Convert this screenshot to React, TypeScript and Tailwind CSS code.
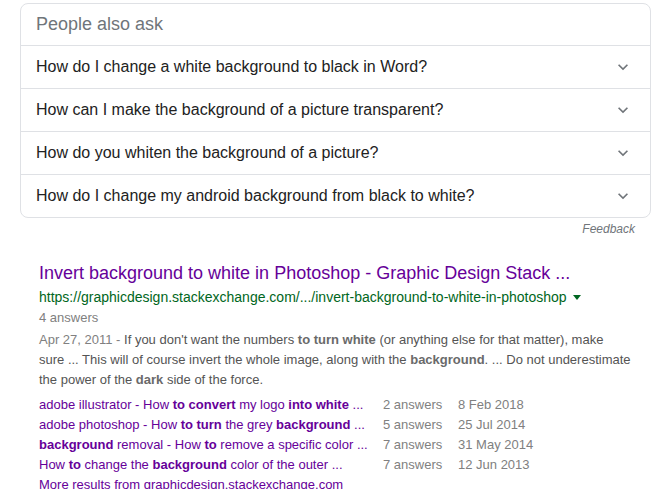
import React from "react";

const questions = [
  "How do I change a white background to black in Word?",
  "How can I make the background of a picture transparent?",
  "How do you whiten the background of a picture?",
  "How do I change my android background from black to white?",
];

type Part = { t: string; b?: boolean };

const sublinks: { parts: Part[]; answers: string; date: string }[] = [
  {
    parts: [
      { t: "adobe illustrator - How " },
      { t: "to convert", b: true },
      { t: " my logo " },
      { t: "into white", b: true },
      { t: " ..." },
    ],
    answers: "2 answers",
    date: "8 Feb 2018",
  },
  {
    parts: [
      { t: "adobe photoshop - How " },
      { t: "to turn", b: true },
      { t: " the grey " },
      { t: "background", b: true },
      { t: " ..." },
    ],
    answers: "5 answers",
    date: "25 Jul 2014",
  },
  {
    parts: [
      { t: "background", b: true },
      { t: " removal - How " },
      { t: "to", b: true },
      { t: " remove a specific color ..." },
    ],
    answers: "7 answers",
    date: "31 May 2014",
  },
  {
    parts: [
      { t: "How " },
      { t: "to", b: true },
      { t: " change the " },
      { t: "background", b: true },
      { t: " color of the outer ..." },
    ],
    answers: "7 answers",
    date: "12 Jun 2013",
  },
];

const Chevron = () => (
  <svg width="20" height="20" viewBox="0 0 24 24" fill="#70757a">
    <path d="M16.59 8.59L12 13.17 7.41 8.59 6 10l6 6 6-6z" />
  </svg>
);

export default function App() {
  return (
    <div className="w-[660px] h-[489px] overflow-hidden bg-white font-['Liberation_Sans',Arial,sans-serif]">
      {/* People also ask */}
      <div className="ml-[20px] mt-[3px] w-[631px] border border-[#dfe1e5] rounded-lg">
        <div className="h-[41px] flex items-center pl-[15px] text-[18px] text-[#70757a]">
          People also ask
        </div>
        {questions.map((q) => (
          <div
            key={q}
            className="h-[43px] border-t border-[#dfe1e5] flex items-center justify-between pl-[15px] pr-[17px] text-[16px] text-[#222]"
          >
            <span>{q}</span>
            <Chevron />
          </div>
        ))}
      </div>

      <div className="w-[650px] text-right pr-[15px] mt-[3px] h-[16px] leading-[16px] text-[12px] italic text-[#70757a]">
        Feedback
      </div>

      {/* Result */}
      <div className="pl-[39px] mt-[25px]">
        <div className="text-[18px] leading-[22px] text-[#660099]">
          Invert background to white in Photoshop - Graphic Design Stack ...
        </div>
        <div className="flex items-center text-[14px] leading-[20px] text-[#006621] mt-[3px]">
          https://graphicdesign.stackexchange.com/.../invert-background-to-white-in-photoshop
          <span className="ml-[6px] inline-block w-0 h-0 border-l-[4px] border-r-[4px] border-t-[5px] border-l-transparent border-r-transparent border-t-[#006621]" />
        </div>
        <div className="text-[13px] leading-[20px] text-[#808080] mt-[1px]">4 answers</div>
        <div className="whitespace-nowrap text-[13px] leading-[20px] text-[#545454] mt-[2px]">
          <span className="text-[#808080]">Apr 27, 2011 - </span>
          If you don't want the numbers <b className="text-[#6a6a6a]">to turn white</b> (or anything else for that
          matter), make
          <br />
          sure ... This will of course invert the whole image, along with the{" "}
          <b className="text-[#6a6a6a]">background</b>. ... Do not underestimate
          <br />
          the power of the <b className="text-[#6a6a6a]">dark</b> side of the force.
        </div>
        <div className="mt-[5px] text-[13px] leading-[20px]">
          {sublinks.map((s) => (
            <div key={s.date} className="flex">
              <div className="w-[344px] text-[#660099] whitespace-nowrap">
                {s.parts.map((p, i) =>
                  p.b ? <b key={i}>{p.t}</b> : <span key={i}>{p.t}</span>
                )}
              </div>
              <div className="w-[75px] text-[#808080]">{s.answers}</div>
              <div className="text-[#808080]">{s.date}</div>
            </div>
          ))}
          <div className="text-[#660099]">More results from graphicdesign.stackexchange.com</div>
        </div>
      </div>
    </div>
  );
}
